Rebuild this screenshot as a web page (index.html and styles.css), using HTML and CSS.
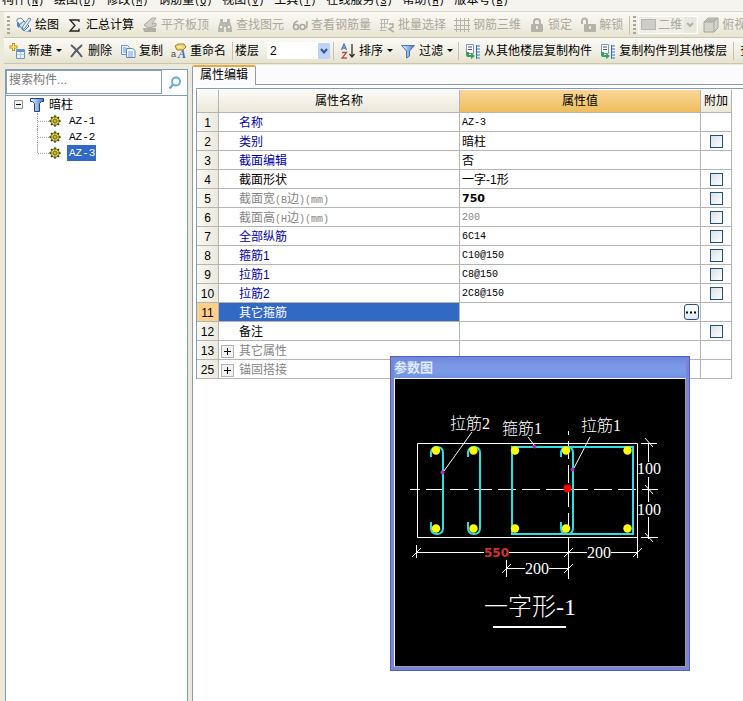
FILE: index.html
```html
<!DOCTYPE html>
<html lang="zh-CN">
<head>
<meta charset="utf-8">
<title>属性编辑</title>
<link rel="stylesheet" href="styles.css">
</head>
<body>
<svg class="defs" aria-hidden="true">
  <defs>
    <linearGradient id="blue" x1="0" y1="0" x2="1" y2="0"><stop offset="0" stop-color="#eaf3ff"/><stop offset="1" stop-color="#3f78d0"/></linearGradient>
    <symbol id="gear" viewBox="0 0 12 12">
      <path d="M6 .3v11.400M.3 6h11.400M2 2l8 8M10 2l-8 8" stroke="#3c370a" stroke-width="1.500"/>
      <circle cx="6" cy="6" r="4.200" fill="#f0e03a" stroke="#3c370a" stroke-width=".8"/>
      <path d="M6 2v8M2 6h8M3.200 3.200l5.600 5.600M8.800 3.200L3.200 8.800" stroke="#67600f" stroke-width=".7"/>
      <circle cx="6" cy="6" r="1.400" fill="#fff36a" stroke="#4b450c" stroke-width=".7"/>
    </symbol>
    <symbol id="copies" viewBox="0 0 16 16">
      <path d="M1.500 1.500h7v9h-7z" fill="#f4f9fc" stroke="#8495ac"/>
      <path d="M3 4h4M3 6.500h4" stroke="#557"/>
      <path d="M1 9h3v3h2v-2l4 3-4 3v-2H3q-2 0-2-2z" fill="#38a05a"/>
      <path d="M11 3h4M11 6h4M11 9h4M11 12h4M11 15h4" stroke="#6ba2dc" stroke-width="1.500"/><path d="M11.500 2v13.500" stroke="#356ba8"/>
    </symbol>
    <symbol id="lock" viewBox="0 0 16 16">
      <path d="M5 8V5a3 3 0 0 1 6 0v3" fill="none" stroke="#b3b2a7" stroke-width="2"/><rect x="2" y="7" width="12" height="8" rx="1" fill="#b4b3a9"/><path d="M8 9v3" stroke="#e9e8de" stroke-width="2"/>
    </symbol>
  </defs>
</svg>

<div class="app">
  <nav class="menubar" aria-label="菜单">
    <button>构件<kbd>(<u>N</u>)</kbd></button><button>绘图<kbd>(<u>D</u>)</kbd></button><button>修改<kbd>(<u>M</u>)</kbd></button><button>钢筋量<kbd>(<u>Q</u>)</kbd></button><button>视图<kbd>(<u>V</u>)</kbd></button><button>工具<kbd>(<u>T</u>)</kbd></button><button>在线服务<kbd>(<u>S</u>)</kbd></button><button>帮助<kbd>(<u>H</u>)</kbd></button><button>版本号<kbd>(<u>B</u>)</kbd></button>
  </nav>

  <div class="toolbar toolbar-draw">
    <span class="grip"></span>
    <button class="tool"><svg viewBox="0 0 16 16"><path d="M1 5V2l4-1 3 3" fill="none" stroke="#7a8fa9"/><path d="M3 8l5-4 5 5-5 5z" fill="#d5e5f5" stroke="#55779e"/><path d="M13 1l2 1-6 9-3 2 1-4z" fill="#eef4fa" stroke="#6784a5"/><path d="M1 5q3 0 3 4l-1 2-2-2zM8 14h4l3-3v4z" fill="#4d7fbc"/></svg>绘图</button>
    <button class="tool"><svg viewBox="0 0 16 16"><path d="M12 5V3H3l5 5.500L3 14h9v-2.500" fill="none" stroke="#222" stroke-width="1.300"/></svg>汇总计算</button>
    <button class="tool" disabled><svg viewBox="0 0 16 16"><path d="M2 8l8-7h4l-4 6 4-1v3l-8 2z" fill="#d1d0c7" stroke="#aaa99f"/><path d="M1 11h5v-1l8 1v4H2z" fill="#b0afa5"/></svg>平齐板顶</button>
    <button class="tool" disabled><svg viewBox="0 0 16 16"><path d="M3 2h3v3h4V2h3v3l2 6v4H9v-5H7v5H1v-4l2-6z" fill="#b8b7ad"/><path d="M3 10h2M11 10h2" stroke="#eee" stroke-width="2"/></svg>查找图元</button>
    <button class="tool" disabled><svg viewBox="0 0 16 16"><path d="M6 4Q1.500 5 1.500 9.500M15 4v4q0 3-2 3" fill="none" stroke="#aaa99f" stroke-width="1.500"/><circle cx="4" cy="10" r="2.500" fill="none" stroke="#aaa99f" stroke-width="1.500"/><circle cx="10.500" cy="10" r="2.500" fill="none" stroke="#aaa99f" stroke-width="1.500"/></svg>查看钢筋量</button>
    <button class="tool" disabled><svg viewBox="0 0 16 16"><path d="M1 2.500h9M2.500 3v11M5.500 3v8M8.500 3v4M1 6.500h8M1 10.500h7M1 13.500h6" fill="none" stroke="#b9b8ae"/><path d="M10 7h4v3l-4 2 5 3" fill="none" stroke="#aeada3" stroke-width="1.500"/></svg>批量选择</button>
    <button class="tool" disabled><svg viewBox="0 0 16 16"><path d="M2.500 1v14M6.500 1v14M10.500 1v14M14.500 1v14M0 3.500h16M0 8.500h16M0 12.500h16" fill="none" stroke="#b3b2a8"/></svg>钢筋三维</button>
    <button class="tool" disabled><svg><use href="#lock"/></svg>锁定</button>
    <button class="tool" disabled><svg viewBox="0 0 16 16"><path d="M2 7V4a2.500 2.500 0 0 1 5 0v3" fill="none" stroke="#b3b2a7" stroke-width="2"/><rect x="4" y="7" width="12" height="8" rx="1" fill="#b4b3a9"/><path d="M10 9v3" stroke="#e9e8de" stroke-width="2"/></svg>解锁</button>
    <span class="divider"></span>
    <span class="grip"></span>
    <span class="combo combo-view"><i class="swatch"></i><select aria-label="视图模式" disabled><option>二维</option></select><svg class="chevron" viewBox="0 0 12 16"><rect width="12" height="16" fill="#e9e8df"/><path d="M3 6l3 3 3-3" fill="none" stroke="#b4b3a8" stroke-width="2"/></svg></span>
    <button class="tool" disabled><svg viewBox="0 0 16 16"><path d="M1 5l4-4h10v10l-4 4H1z" fill="#d5d4ca" stroke="#a7a69b"/><path d="M1 5h10v10M11 5l4-4" fill="none" stroke="#a7a69b"/><path d="M2 5l3-3h9l-3 3z" fill="#b7b6ac"/></svg>俯视</button>
  </div>

  <div class="toolbar toolbar-edit">
    <button class="tool has-menu"><svg viewBox="0 0 16 16"><path d="M4.500 0v8M.5 4h8" stroke="#b98b18" stroke-width="3"/><path d="M4.500 1v6M1.500 4h6" stroke="#ffe36b" stroke-width="1.500"/><path d="M7.500 6.500h8v9h-8z" fill="#eaf4ff" stroke="#6e94c6"/><path d="M8 8h7" stroke="#5d8fd3" stroke-width="2"/><path d="M8 11.500h7M11.500 9v6" stroke="#b0cbe9"/></svg>新建<i class="caret"></i></button>
    <button class="tool"><svg viewBox="0 0 16 16"><path d="M2 2q5 4 11 12M13 2Q7 7 2 14" fill="none" stroke="#555e68" stroke-width="2"/></svg>删除</button>
    <button class="tool"><svg viewBox="0 0 16 16"><path d="M1.500 2.500h6l2 2v7h-8z" fill="#e7f2ff" stroke="#6f96c8"/><path d="M6.500 5.500h6l2.500 2v7H6.500z" fill="#f4faff" stroke="#5c88c2"/><path d="M3 5h3M3 7h3M3 9h3M8 9h5M8 11h5M8 13h5" stroke="#719ed3"/></svg>复制</button>
    <button class="tool"><svg viewBox="0 0 16 16"><path d="M4 3l3-2h6l2 3-3 3H6z" fill="#eed276" stroke="#a48328"/><path d="M6 4h5" stroke="#fff5bd"/><text x="0" y="14" class="ico-a">a</text><text x="7" y="15" class="ico-b">A</text></svg>重命名</button>
    <span class="divider"></span>
    <label class="floor" for="floor">楼层</label>
    <span class="combo combo-floor"><select id="floor"><option>2</option></select><svg class="chevron" viewBox="0 0 12 16"><rect width="12" height="16" rx="1" fill="#bfd3f6"/><path d="M3 6l3 3.500L9 6" fill="none" stroke="#33568c" stroke-width="2"/></svg></span>
    <span class="divider"></span>
    <button class="tool has-menu"><svg viewBox="0 0 16 16"><path d="M1.500 7L4 1l2.500 6M2.500 5h3" fill="none" stroke="#507bb0" stroke-width="1.300"/><path d="M2 9.500h4.500L2 15h5" fill="none" stroke="#b9505a" stroke-width="1.300"/><path d="M12 1v12M9.500 11l2.500 3 2.500-3" fill="none" stroke="#333" stroke-width="1.300"/></svg>排序<i class="caret"></i></button>
    <button class="tool has-menu"><svg viewBox="0 0 16 16"><path d="M1.500 2.500h13L9.500 8v5l-3 2V8z" fill="url(#blue)" stroke="#4874b5"/></svg>过滤<i class="caret"></i></button>
    <span class="divider"></span>
    <button class="tool"><svg><use href="#copies"/></svg>从其他楼层复制构件</button>
    <button class="tool"><svg><use href="#copies"/></svg>复制构件到其他楼层</button>
    <span class="divider"></span>
    <button class="tool">查找</button>
  </div>

  <main class="workspace">
    <aside class="sidebar">
      <form class="search">
        <input type="text" aria-label="搜索构件" placeholder="搜索构件...">
        <button type="button" aria-label="搜索"><svg viewBox="0 0 14 14"><circle cx="8" cy="5.500" r="4" fill="#f4fbff" stroke="#69a6cf" stroke-width="1.800"/><path d="M5 8.500L1.500 12.500" stroke="#69a6cf" stroke-width="2.200"/></svg></button>
      </form>
      <div class="tree">
        <div class="tree-root">
          <svg class="toggle" viewBox="0 0 9 9"><path d="M.5 .5h8v8h-8z" fill="#f4f3ec" stroke="#8395a5"/><path d="M2 4.500h5" stroke="#000"/></svg>
          <svg class="column-icon" viewBox="0 0 14 15"><path d="M.5 1.500h13v3h-2l-2 2v8h-5v-8l-2-2h-2z" fill="url(#blue)" stroke="#1f4381"/></svg>
          <span>暗柱</span>
        </div>
        <ul>
          <li><svg><use href="#gear"/></svg><span>AZ-1</span></li>
          <li><svg><use href="#gear"/></svg><span>AZ-2</span></li>
          <li class="selected"><svg><use href="#gear"/></svg><span>AZ-3</span></li>
        </ul>
      </div>
    </aside>

    <section class="editor">
      <div class="tabs"><button class="tab">属性编辑</button></div>
      <div class="pane">
        <table>
          <colgroup><col class="c-num"><col class="c-name"><col class="c-value"><col class="c-extra"></colgroup>
          <thead><tr><th></th><th>属性名称</th><th class="active">属性值</th><th>附加</th></tr></thead>
          <tbody>
            <tr><th>1</th><td class="name key">名称</td><td class="mono">AZ-3</td><td></td></tr>
            <tr><th>2</th><td class="name key">类别</td><td>暗柱</td><td class="tick"><input type="checkbox" aria-label="附加 类别"></td></tr>
            <tr><th>3</th><td class="name key">截面编辑</td><td>否</td><td></td></tr>
            <tr><th>4</th><td class="name">截面形状</td><td>一字-1形</td><td class="tick"><input type="checkbox" aria-label="附加 截面形状"></td></tr>
            <tr><th>5</th><td class="name dim">截面宽<span class="mono">(B</span>边<span class="mono">)(mm)</span></td><td class="strong">750</td><td class="tick"><input type="checkbox" aria-label="附加 截面宽"></td></tr>
            <tr><th>6</th><td class="name dim">截面高<span class="mono">(H</span>边<span class="mono">)(mm)</span></td><td class="mono dim">200</td><td class="tick"><input type="checkbox" aria-label="附加 截面高"></td></tr>
            <tr><th>7</th><td class="name key">全部纵筋</td><td class="mono">6C14</td><td class="tick"><input type="checkbox" aria-label="附加 全部纵筋"></td></tr>
            <tr><th>8</th><td class="name key">箍筋1</td><td class="mono">C10@150</td><td class="tick"><input type="checkbox" aria-label="附加 箍筋1"></td></tr>
            <tr><th>9</th><td class="name key">拉筋1</td><td class="mono">C8@150</td><td class="tick"><input type="checkbox" aria-label="附加 拉筋1"></td></tr>
            <tr><th>10</th><td class="name key">拉筋2</td><td class="mono">2C8@150</td><td class="tick"><input type="checkbox" aria-label="附加 拉筋2"></td></tr>
            <tr class="current"><th>11</th><td class="name">其它箍筋</td><td class="action"><button aria-label="编辑其它箍筋"><svg viewBox="0 0 11 3"><path d="M0 .5h2v2H0zM4 .5h2v2H4zM8 .5h2v2H8z"/></svg></button></td><td></td></tr>
            <tr><th>12</th><td class="name">备注</td><td></td><td class="tick"><input type="checkbox" aria-label="附加 备注"></td></tr>
            <tr><th>13</th><td class="group dim"><button class="plus" aria-label="展开其它属性"></button>其它属性</td><td></td><td></td></tr>
            <tr><th>25</th><td class="group dim"><button class="plus" aria-label="展开锚固搭接"></button>锚固搭接</td><td></td><td></td></tr>
          </tbody>
        </table>
      </div>
    </section>
  </main>

  <section class="dialog" aria-label="参数图">
    <h2>参数图</h2>
    <svg class="drawing" viewBox="395 379 290 287">
      <g class="line">
        <path d="M637.500 558V443.500H417.500V537.500H637.500"/>
        <path d="M410 489.500H658" stroke-dasharray="18 6" stroke-dashoffset="8"/>
        <path d="M568.500 431v4M568.500 441v18M568.500 465v18M568.500 489v18M568.500 513v18M568.500 538v41"/>
        <path d="M472 432L444 471M528 437L534 445M590 437L574 468"/>
        <path d="M648.500 443v19M648.500 477v25M648.500 517v22M641 443.500h16M641 537.500h17M645 438l8 9M645 485l8 9M645 533l8 9"/>
        <path d="M416 552.500h68M509 552.500h78M611 552.500h27M416.500 545v13M412 557l9-9M564 557l9-9M633 557l9-9"/>
        <path d="M506 568.500h19M549 568.500h20M506.500 560v17M502 573l9-9M564 573l9-9"/>
      </g>
      <path class="underline" d="M493 627h73"/>
      <g class="rebar">
        <path d="M512 447H633V534H512Z"/>
        <path d="M431 457v-5q1-5 6-5q6 0 6 6v75q0 6-6 6t-6-6v-6"/>
        <path d="M468 457v-5q1-5 6-5q6 0 6 6v75q0 6-6 6t-6-6v-6"/>
        <path d="M561 457v-5q1-5 6-5q6 0 6 6v75q0 6-6 6t-6-6v-6"/>
      </g>
      <g fill="#ffff00">
        <circle cx="436" cy="450.500" r="4.200"/><circle cx="473.500" cy="450.500" r="4.200"/><circle cx="515" cy="450.500" r="4.200"/><circle cx="566" cy="450.500" r="4.200"/><circle cx="627.500" cy="450.500" r="4.200"/>
        <circle cx="436" cy="528.500" r="4.200"/><circle cx="473.500" cy="528.500" r="4.200"/><circle cx="515" cy="528.500" r="4.200"/><circle cx="566" cy="528.500" r="4.200"/><circle cx="627.500" cy="528.500" r="4.200"/>
      </g>
      <circle cx="567.500" cy="488.500" r="4" fill="#ff0000"/>
      <g fill="#b828c8"><circle cx="442.500" cy="472.500" r="2"/><circle cx="534.500" cy="446.500" r="2"/><circle cx="572.500" cy="469.500" r="2"/></g>
      <g class="cad-text">
        <text x="450" y="429">拉筋2</text><text x="502" y="434">箍筋1</text><text x="581" y="431">拉筋1</text>
        <text x="637" y="474">100</text><text x="637" y="515">100</text><text x="587" y="558">200</text><text x="525" y="574">200</text>
        <text class="cad-title" x="484" y="615">一字形-1</text>
      </g>
      <text class="cad-red" x="484" y="557">550</text>
    </svg>
  </section>
</div>
</body>
</html>
```

FILE: styles.css
```css
* { box-sizing: border-box; }

html, body { height: 100%; margin: 0; }

body {
  overflow: hidden;
  background: #ece9d8;
  color: #000;
  font: 12px/16px "Liberation Sans", "Noto Sans CJK SC", sans-serif;
}

button, input, select { font: inherit; color: inherit; }

button {
  margin: 0;
  padding: 0;
  border: 0;
  background: none;
  white-space: nowrap;
}

.defs { position: absolute; width: 0; height: 0; }

.app {
  position: relative;
  display: flex;
  flex-direction: column;
  height: 100%;
}

.mono { font-family: "Liberation Mono", "Noto Sans CJK SC", monospace; font-size: 10px; }

/* Menu bar */
.menubar {
  display: flex;
  flex: none;
  align-items: flex-end;
  height: 12px;
  padding: 0 0 1px 2px;
  gap: 10px;
  overflow: hidden;
  background: #f5f4ee;
  border-bottom: 1px solid #d9d6c6;
}

.menubar kbd { font: 10px/16px "Liberation Mono", monospace; }

/* Toolbars */
.toolbar {
  display: flex;
  flex: none;
  align-items: center;
  height: 26px;
  margin-left: 4px;
  overflow: hidden;
  background: linear-gradient(#faf9f5, #f0eee2 60%, #e5e2cf);
  border-bottom: 1px solid #cbc7ae;
}

.toolbar > * { flex: none; }
.toolbar-draw { padding-left: 2px; }
.toolbar-edit { padding-left: 1px; }

.tool {
  display: flex;
  align-items: center;
  gap: 3px;
  padding: 0 4px;
}

.has-menu { padding-right: 3px; }
.tool svg { width: 16px; height: 16px; }
.tool:disabled { color: #aaa89b; }

.caret {
  margin-left: 1px;
  border: 3px solid transparent;
  border-top-color: #000;
  border-bottom: 0;
}

.grip {
  width: 3px;
  height: 18px;
  margin: 0 2px 0 1px;
  background: repeating-linear-gradient(#a9a799 0 2px, transparent 2px 4px);
}

.divider {
  width: 1px;
  height: 18px;
  margin: 0 2px;
  background: #c5c2b0;
}

.combo { display: flex; align-items: center; background: #fff; }

.combo select {
  flex: 1;
  min-width: 0;
  padding: 0;
  border: 0;
  appearance: none;
  background: none;
  opacity: 1;
}

.combo .chevron { width: 12px; height: 16px; }
.combo-view { width: 60px; height: 18px; padding: 1px; margin-right: 1px; color: #aaa89b; background: #f0efe7; border: 1px solid #fff; }
.combo-floor { width: 63px; height: 17px; margin: 0 1px 0 8px; padding-left: 3px; }

.swatch { width: 15px; height: 11px; margin: 0 2px 0 1px; background: #cfcec4; border: 1px solid #b9b8ad; }

.ico-a { font: 9px "Liberation Sans", sans-serif; fill: #444; }
.ico-b { font: italic bold 12px "Liberation Serif", serif; fill: #3d6db8; }

/* Work area */
.workspace {
  display: flex;
  flex: 1;
  min-height: 0;
  padding-left: 5px;
  gap: 4px;
}

.sidebar {
  flex: none;
  width: 183px;
  margin-top: 5px;
  background: #fff;
  border: 1px solid #7f9db9;
  border-bottom: 0;
}

.search { display: flex; height: 26px; border-bottom: 1px solid #7f9db9; }

.search input {
  flex: 1;
  min-width: 0;
  height: 24px;
  padding: 0 2px 4px;
  border: 1px solid #8ba0b4;
  border-radius: 0;
  outline: 0;
}

.search input::placeholder { color: #777; }

.search button { display: grid; place-items: center; width: 25px; }
.search svg { width: 14px; height: 14px; }

.tree-root { display: flex; align-items: center; height: 17px; padding-left: 8px; }
.toggle { width: 9px; height: 9px; margin-right: 7px; }
.column-icon { width: 14px; height: 15px; margin-right: 5px; }

.tree ul {
  margin: 0 0 0 31px;
  padding: 0;
  list-style: none;
}

.tree li {
  display: flex;
  align-items: center;
  height: 16px;
  border-left: 1px dotted #a0a0a0;
}

.tree li::before { content: ""; width: 11px; border-top: 1px dotted #a0a0a0; }
.tree li svg { width: 12px; height: 12px; margin-right: 6px; }
.tree li span { padding: 0 1px 0 2px; font: 11px/16px "Liberation Mono", monospace; }
.tree .selected span { color: #fff; background: #316ac5; }
.tree .selected { border-image: linear-gradient(#b8b8b8 50%, transparent 50%) 1; }

/* Property editor */
.editor { display: flex; flex: 1; flex-direction: column; min-width: 0; }

.tabs {
  display: flex;
  flex: none;
  height: 20px;
  margin-top: 1px;
  background: #fbfbfe;
  border-bottom: 1px solid #919b9c;
}

.tab {
  width: 64px;
  height: 20px;
  padding-bottom: 2px;
  background: #fbfbfe;
  border: 1px solid #919b9c;
  border-top: 2px solid #f0a63a;
  border-bottom: 0;
  border-radius: 2px 2px 0 0;
}

.pane {
  display: flex;
  flex: 1;
  flex-direction: column;
  padding: 3px 0 0 3px;
  background: #fff;
  border-left: 1px solid #919b9c;
}

.pane::before { content: ""; border-top: 1px solid #7f9db9; }

table {
  flex: none;
  width: calc(100% - 11px);
  table-layout: fixed;
  border-collapse: separate;
  border-spacing: 0;
  border-left: 1px solid #7f9db9;
  border-top: 1px solid #fff;
}

.c-num { width: 22px; }
.c-extra { width: 31px; }

td, th {
  height: 19px;
  padding: 1px 2px 0;
  overflow: hidden;
  font-weight: normal;
  line-height: 16px;
  text-align: left;
  white-space: nowrap;
  border-right: 1px solid #b4b4b4;
  border-bottom: 1px solid #b4b4b4;
}

th {
  padding: 1px 0 0;
  text-align: center;
  background: linear-gradient(90deg, #f9f8f3, #ebe9dc);
}

thead th { height: 23px; padding: 0; background: linear-gradient(#fbfaf6, #ebe8d9); }
thead .active { background: linear-gradient(#fad797, #efbd5c); }

.name { padding-left: 20px; }
.name .mono { line-height: 10px; }
.key { color: #0000a8; }
.dim { color: #858585; }
.strong { font: bold 11px/16px "DejaVu Sans", sans-serif; }
.current th { background: #fcd088; }
.current .name { color: #fff; background: #316ac5; }

.tick { padding: 0; text-align: center; }

.tick input {
  display: block;
  width: 13px;
  height: 13px;
  margin: 1px auto 0;
  appearance: none;
  background: linear-gradient(135deg, #dcdfe0, #fff);
  border: 1px solid #1c5180;
}

.action { padding: 0 1px 0 0; }

.action button {
  display: grid;
  place-items: center;
  width: 15px;
  height: 16px;
  margin-left: auto;
  background: linear-gradient(#fff, #dfe7ee);
  border: 1px solid #27507c;
  border-radius: 3px;
}

.action svg { width: 11px; height: 3px; }

.plus {
  width: 13px;
  height: 13px;
  margin-right: 5px;
  vertical-align: -2px;
  background:
    linear-gradient(#000, #000) center / 7px 1px no-repeat,
    linear-gradient(#000, #000) center / 1px 7px no-repeat,
    #f1f1f1;
  border: 1px solid #b3b3b3;
}

/* Floating diagram window */
.dialog {
  position: absolute;
  top: 356px;
  left: 390px;
  width: 300px;
  padding: 0 3px 3px;
  background: #7b85d8;
  border: 1px solid #5360ba;
}

.dialog h2 {
  height: 21px;
  margin: 0;
  color: #e1ebff;
  font-size: 13px;
  font-weight: bold;
  line-height: 22px;
  background: linear-gradient(#6f86db, #7b98e4 40%, #799be8 70%, #7290e0);
}

.drawing {
  display: block;
  width: 100%;
  background: #000;
  border: 1px solid #f4f4f4;
  border-right-color: #9d9da5;
  border-bottom-color: #9d9da5;
}

.line { fill: none; stroke: #fff; stroke-width: 1; }
.underline { stroke: #fff; stroke-width: 2; }
.rebar { fill: none; stroke: #2fdfdf; stroke-width: 2; }

.cad-text {
  fill: #fff;
  font: 300 16px "Liberation Serif", "Noto Sans CJK SC", serif;
}

.cad-title { font-size: 24px; }
.cad-red { fill: #d83030; font: bold 12px "DejaVu Sans", sans-serif; }
```
